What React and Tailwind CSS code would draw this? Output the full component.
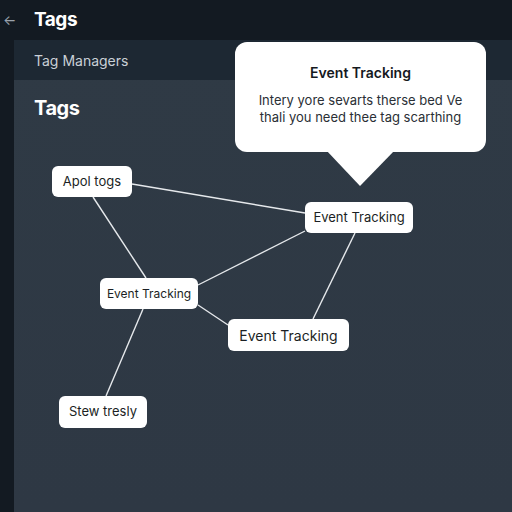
import React from "react"

var nodes = [
  { id: "apol", label: "Apol togs", x: 52, y: 166, w: 80, h: 31, size: "text-[13px]" },
  { id: "etR", label: "Event Tracking", x: 305, y: 202, w: 108, h: 31, size: "text-[13px]" },
  { id: "etM", label: "Event Tracking", x: 100, y: 278, w: 98, h: 31, size: "text-[12px]" },
  { id: "etB", label: "Event Tracking", x: 228, y: 319, w: 121, h: 32, size: "text-[14px]" },
  { id: "stew", label: "Stew tresly", x: 59, y: 396, w: 88, h: 32, size: "text-[13px]" },
]

var edges = [
  [132, 184, 305, 213],
  [93, 197, 146, 278],
  [198, 285, 305, 231],
  [355, 233, 313, 319],
  [198, 305, 228, 325],
  [143, 309, 106, 396],
]

export default function App() {
  return (
    <div className="relative w-[512px] h-[512px] overflow-hidden bg-[#131a22] font-['Inter',sans-serif]">
      <div className="h-10 flex items-center">
        <span className="w-[34px] pl-[3px] text-[#9aa3ad] text-sm">←</span>
        <h1 className="text-white text-[19px] font-bold tracking-tight">Tags</h1>
      </div>
      <div className="ml-[14px] h-[472px] bg-gradient-to-b from-[#2f3a45] to-[#2e3844] flex flex-col">
        <div className="h-10 bg-[#1d2833] flex items-center pl-5">
          <span className="text-[#c9d0d7] text-[14px]">Tag Managers</span>
        </div>
        <div className="pl-5 pt-[13px]">
          <h2 className="text-white text-[20px] font-bold tracking-tight">Tags</h2>
        </div>
      </div>

      <svg className="absolute left-0 top-0" width="512" height="512">
        {edges.map((e, i) => (
          <line key={i} x1={e[0]} y1={e[1]} x2={e[2]} y2={e[3]} stroke="#e6e9ec" strokeWidth="1.4" />
        ))}
        <polygon points="326,150 395,150 360,186" fill="#ffffff" />
      </svg>

      {nodes.map(n => (
        <div key={n.id} className={"absolute bg-white rounded-[6px] flex items-center justify-center text-[#1b1f24] " + n.size} style={{ left: n.x, top: n.y, width: n.w, height: n.h }}>
          {n.label}
        </div>
      ))}

      <div className="absolute left-[235px] top-[42px] w-[251px] h-[110px] bg-white rounded-[12px] flex flex-col items-center pt-[20px]">
        <p className="text-[#15191e] text-[14px] font-semibold">Event Tracking</p>
        <p className="mt-[9px] text-[#2a2f35] text-[13px] leading-[17px] text-center">Intery yore sevarts therse bed Ve<br />thali you need thee tag scarthing</p>
      </div>
    </div>
  )
}
